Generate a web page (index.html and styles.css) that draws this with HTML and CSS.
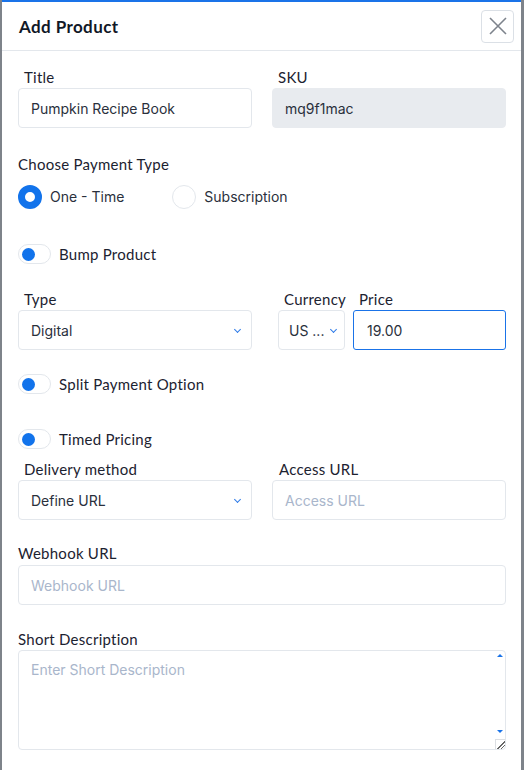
FILE: index.html
```html
<!DOCTYPE html>
<html>
<head>
<meta charset="utf-8">
<link rel="stylesheet" href="styles.css">
</head>
<body>
<div class="modal">
  <div class="header">
    <h1 class="title">Add Product</h1>
    <button class="close" aria-label="Close">
      <svg width="20" height="20" viewBox="0 0 20 20"><path d="M2 2L18 18M18 2L2 18" stroke="#7d838c" stroke-width="1.6" fill="none"/></svg>
    </button>
  </div>
  <div class="body">
    <div class="row two">
      <div class="field">
        <label class="lbl indent">Title</label>
        <div class="input">Pumpkin Recipe Book</div>
      </div>
      <div class="field">
        <label class="lbl indent">SKU</label>
        <div class="input disabled">mq9f1mac</div>
      </div>
    </div>

    <div class="lbl pay-label">Choose Payment Type</div>
    <div class="radios">
      <div class="radio-item"><span class="radio checked"></span><span class="rtext">One - Time</span></div>
      <div class="radio-item second"><span class="radio"></span><span class="rtext">Subscription</span></div>
    </div>

    <div class="toggle-row bump"><span class="toggle"><span class="knob"></span></span><span class="ttext">Bump Product</span></div>

    <div class="row three">
      <div class="field f-type">
        <label class="lbl indent">Type</label>
        <div class="input select">Digital<span class="chev"></span></div>
      </div>
      <div class="field f-cur">
        <label class="lbl indent">Currency</label>
        <div class="input select small">US ...<span class="chev"></span></div>
      </div>
      <div class="field f-price">
        <label class="lbl indent">Price</label>
        <div class="input focus">19.00</div>
      </div>
    </div>

    <div class="toggle-row split"><span class="toggle"><span class="knob"></span></span><span class="ttext">Split Payment Option</span></div>
    <div class="toggle-row timed"><span class="toggle"><span class="knob"></span></span><span class="ttext">Timed Pricing</span></div>

    <div class="row two delivery">
      <div class="field">
        <label class="lbl indent">Delivery method</label>
        <div class="input select">Define URL<span class="chev"></span></div>
      </div>
      <div class="field">
        <label class="lbl indent">Access URL</label>
        <div class="input placeholder">Access URL</div>
      </div>
    </div>

    <div class="field webhook">
      <label class="lbl">Webhook URL</label>
      <div class="input placeholder">Webhook URL</div>
    </div>

    <div class="field shortdesc">
      <label class="lbl">Short Description</label>
      <div class="textarea-wrap">
        <textarea class="textarea" placeholder="Enter Short Description"></textarea>
        <span class="arrow up"></span>
        <span class="arrow down"></span>
        <span class="corner"></span>
      </div>
    </div>
  </div>
</div>
</body>
</html>
```

FILE: styles.css
```css
* { box-sizing: border-box; }
html, body { margin: 0; padding: 0; }
body {
  background: #7e838a;
  width: 524px;
  height: 770px;
  overflow: hidden;
  font-family: "Lato", "Open Sans", sans-serif;
}
.modal {
  margin-left: 2px;
  width: 519px;
  height: 770px;
  background: #fff;
  border-top: 2px solid #1a73e8;
}
.header {
  height: 49px;
  border-bottom: 1px solid #e3e7ec;
  display: flex;
  align-items: center;
  justify-content: space-between;
  padding: 0 7px 0 17px;
}
.title {
  margin: 0;
  font-size: 17px;
  font-weight: 700;
  color: #111827;
  letter-spacing: 0.4px;
}
.close {
  width: 33px;
  height: 33px;
  border: 1px solid #dbe0e6;
  border-radius: 4px;
  background: #fff;
  padding: 0;
  display: flex;
  align-items: center;
  justify-content: center;
}
.body {
  padding: 16px 15px 0 16px;
}
.row { display: flex; }
.row.two { gap: 20px; }
.row.two .field { width: 234px; }
.row.three { margin-top: 25px; }
.f-type { width: 234px; }
.f-cur { width: 67px; margin-left: 26px; }
.f-price { width: 153px; margin-left: 8px; }
.field { display: flex; flex-direction: column; }
.lbl {
  display: block;
  font-size: 15px;
  line-height: 20px;
  letter-spacing: 0.25px;
  color: #1c2230;
  margin-bottom: 1px;
  white-space: nowrap;
}
.lbl.indent { padding-left: 6px; }
.input {
  height: 40px;
  border: 1px solid #e3e7ec;
  border-radius: 4px;
  padding: 0 12px;
  display: flex;
  align-items: center;
  font-family: "Inter", "Open Sans", sans-serif;
  font-size: 14px;
  color: #2a303c;
  position: relative;
  white-space: nowrap;
}
.input.disabled { background: #e8ebef; border-color: #e8ebef; }
.input.focus { border-color: #1a73e8; border-radius: 3px; padding-left: 13px; }
.input.placeholder { color: #a9b6cb; }
.input.select { padding-right: 28px; }
.input.small { padding-left: 10px; }
.chev {
  position: absolute;
  right: 11px;
  top: 16px;
  width: 5px;
  height: 5px;
  border-right: 1.5px solid #2f7be8;
  border-bottom: 1.5px solid #2f7be8;
  transform: rotate(45deg);
}
.input.small .chev { right: 8px; }
.pay-label { margin-top: 26px; margin-bottom: 11px; }
.radios { display: flex; align-items: center; height: 24px; }
.radio-item { display: flex; align-items: center; }
.radio-item.second { margin-left: 48px; }
.radio {
  width: 24px;
  height: 24px;
  border-radius: 50%;
  border: 1px solid #e3e7ec;
  background: #fff;
  display: inline-block;
}
.radio.checked { border: 7px solid #1273eb; }
.rtext {
  margin-left: 8px;
  font-family: "Inter", "Open Sans", sans-serif;
  font-size: 14px;
  color: #2a303c;
  position: relative;
  top: -1px;
}
.toggle-row { display: flex; align-items: center; height: 20px; }
.toggle-row.bump { margin-top: 35px; }
.toggle-row.split { margin-top: 24px; }
.toggle-row.timed { margin-top: 35px; }
.toggle {
  width: 33px;
  height: 20px;
  border: 1px solid #e3e7ec;
  border-radius: 10px;
  background: #fff;
  display: flex;
  align-items: center;
  padding-left: 3px;
}
.knob {
  width: 13px;
  height: 13px;
  border-radius: 50%;
  background: #1273eb;
}
.ttext {
  margin-left: 8px;
  font-size: 15px;
  letter-spacing: 0.25px;
  color: #1c2230;
}
.delivery { margin-top: 10px; }
.delivery .field:nth-child(2) .lbl { padding-left: 7px; }
.webhook { margin-top: 23px; }
.webhook .lbl { margin-bottom: 2px; }
.shortdesc { margin-top: 24px; }
.textarea-wrap { position: relative; height: 100px; }
.textarea {
  display: block;
  width: 100%;
  height: 100px;
  border: 1px solid #e3e7ec;
  border-radius: 4px;
  padding: 10px 12px;
  font-family: "Inter", "Open Sans", sans-serif;
  font-size: 14px;
  color: #2a303c;
  resize: none;
  outline: none;
}
.textarea::placeholder { color: #a9b6cb; }
.arrow {
  position: absolute;
  right: 3px;
  width: 0;
  height: 0;
  border-left: 3px solid transparent;
  border-right: 3px solid transparent;
}
.arrow.up { top: 4px; border-bottom: 3px solid #1a73e8; }
.arrow.down { top: 80px; border-top: 3px solid #1a73e8; }
.corner {
  position: absolute;
  right: 1px;
  bottom: 1px;
  width: 10px;
  height: 10px;
  border-left: 1px solid #dcdfe3;
  border-top: 1px solid #dcdfe3;
  background: linear-gradient(135deg, transparent 55%, #666 55%, #666 62%, transparent 62%, transparent 75%, #666 75%, #666 82%, transparent 82%);
}
```
